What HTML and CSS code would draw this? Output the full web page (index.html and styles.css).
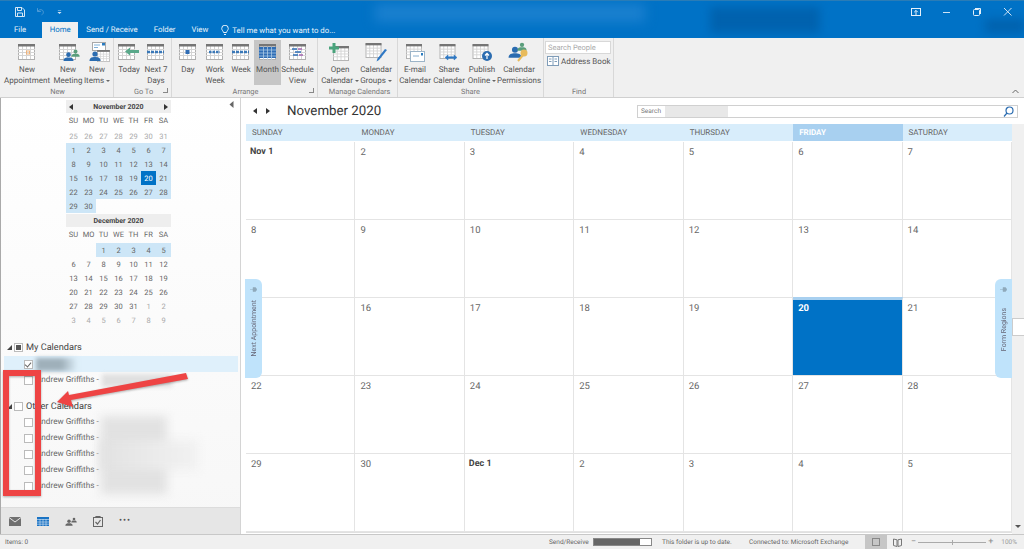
FILE: index.html
```html
<!DOCTYPE html>
<html lang="en">
<head>
    <meta charset="UTF-8">
    <title>Calendar - Outlook</title>
    <link rel="stylesheet" href="styles.css">
</head>
<body>
    <svg class="defs">
        <symbol id="cal" viewBox="0 0 17 16">
            <rect x="0.5" y="1" width="16" height="14.5" fill="#fff" stroke="#b0b0b0"/>
            <path d="M0 5.5H17M0 8.5H17M0 11.5H17M4.5 2V15M8.5 2V15M12.5 2V15" stroke="#d4d4d4" fill="none"/>
            <rect width="17" height="2.5" fill="#757575"/>
        </symbol>
        <symbol id="person" viewBox="0 0 12 10">
            <circle cx="6" cy="3" r="2.6"/>
            <path d="M0.5 10C0.5 6.5 3 6 6 6S11.5 6.5 11.5 10Z"/>
        </symbol>
        <symbol id="pin" viewBox="0 0 7 7">
            <path d="M0 3.500H3M3 1.500V5.500H5.500L7 3.500L5.500 1.500Z" fill="#8fa9bb" stroke="#8fa9bb" stroke-width="0.500"/>
        </symbol>
    </svg>

    <header class="titlebar">
        <div class="glow"></div>
        <div class="smudge"></div>
        <div class="smudge two"></div>
        <div class="qat">
            <svg width="12" height="12" viewBox="0 0 12 12" fill="none" stroke="#d5e6f5"><path d="M1.5 1.5H8L10.500 4V10.500H1.5Z"/><path d="M3.5 1.5V4.5H7.5V1.5M3.5 10.500V7H8.500V10.500"/></svg>
            <svg class="undo" width="10" height="9" viewBox="0 0 12 10" fill="none" stroke="#4d9ad6" stroke-width="1.2"><path d="M3 1V5H7M3 5C5 2 10 2 10 6C10 7.500 9 8.500 8 9"/></svg>
            <svg class="more" width="5" height="6" viewBox="0 0 6 6" fill="#cfe3f4"><path d="M1 0.500H5V1.300H1ZM0.500 3H5.500L3 5.500Z"/></svg>
            <div class="winbtns">
                <svg width="10" height="8" viewBox="0 0 10 8" fill="none" stroke="#e4f0fa"><rect x="0.500" y="0.500" width="9" height="7"/><path d="M5 7V2.500M3.200 4.200L5 2.400L6.800 4.200"/></svg>
                <svg width="10" height="8" viewBox="0 0 10 8" stroke="#cfe3f4"><path d="M1 4.500H8"/></svg>
                <svg width="10" height="8" viewBox="0 0 10 8" fill="none" stroke="#e4f0fa"><rect x="1.500" y="1.500" width="6" height="6" rx="1"/><path d="M3 0.500H8.500V6"/></svg>
                <svg width="10" height="8" viewBox="0 0 10 8" fill="none" stroke="#cfe3f4"><path d="M1 0L8.500 7.500M8.500 0L1 7.500"/></svg>
            </div>
        </div>
        <nav class="tabs">
            <span class="tab">File</span>
            <span class="tab home">Home</span>
            <span class="tab">Send / Receive</span>
            <span class="tab">Folder</span>
            <span class="tab">View</span>
            <span class="tell">
                <svg width="8" height="11" viewBox="0 0 8 11" fill="none" stroke="#e4f0fa"><path d="M2.500 7.500C2 5.500 0.700 5 0.700 3.500A3.300 3.300 0 0 1 7.300 3.500C7.300 5 6 5.500 5.500 7.500ZM3 9.500H5"/></svg>
                Tell me what you want to do...
            </span>
        </nav>
    </header>

    <section class="ribbon">
        <div class="group g-new">
            <div class="btns">
                <div class="btn">
                    <svg width="28" height="20" viewBox="0 0 28 20"><use href="#cal" x="5" y="2" width="17" height="16"/><rect x="13.500" y="9" width="3" height="3" fill="none" stroke="#eeb27a"/></svg>
                    <span>New<br>Appointment</span>
                </div>
                <div class="btn">
                    <svg width="28" height="20" viewBox="0 0 28 20"><use href="#cal" x="5" y="2" width="17" height="16"/><use href="#person" x="9" y="10" width="11" height="9" fill="#2b6cb0"/><use href="#person" x="17" y="7" width="9" height="8" fill="#5a9e7c"/></svg>
                    <span>New<br>Meeting</span>
                </div>
                <div class="btn">
                    <svg width="28" height="20" viewBox="0 0 28 20"><rect x="9.500" y="0.500" width="13" height="8" fill="#fff" stroke="#a8a8a8"/><path d="M11 3H17M11 5.500H15" stroke="#7fb0d8"/><rect x="19" y="1" width="3" height="2.500" fill="#2b7cc0"/><use href="#cal" x="14" y="8" width="13" height="12"/><use href="#person" x="6" y="9" width="12" height="10" fill="#2b6cb0"/></svg>
                    <span>New<br>Items <i class="drop"></i></span>
                </div>
            </div>
            <div class="glabel">New</div>
        </div>
        <div class="group g-goto">
            <div class="btns">
                <div class="btn">
                    <svg width="28" height="20" viewBox="0 0 28 20"><use href="#cal" x="3" y="2" width="17" height="16"/><path d="M10 9.500L15 5.500V8H24V11H15V13.500Z" fill="#5aa88a"/></svg>
                    <span>Today</span>
                </div>
                <div class="btn">
                    <svg width="28" height="20" viewBox="0 0 28 20"><use href="#cal" x="5" y="2" width="17" height="16"/><path d="M5 10H22" stroke="#3a78b8" stroke-width="2.500" stroke-dasharray="3 1"/></svg>
                    <span>Next 7<br>Days</span>
                </div>
            </div>
            <div class="glabel">Go To</div>
            <i class="launcher"></i>
        </div>
        <div class="group g-arrange">
            <div class="btns">
                <div class="btn">
                    <svg width="28" height="20" viewBox="0 0 28 20"><use href="#cal" x="5" y="2" width="17" height="16"/><rect x="11.500" y="8" width="4" height="4" fill="#2f6db5"/></svg>
                    <span>Day</span>
                </div>
                <div class="btn">
                    <svg width="28" height="20" viewBox="0 0 28 20"><use href="#cal" x="5" y="2" width="17" height="16"/><path d="M8 10H19" stroke="#3a78b8" stroke-width="2.500" stroke-dasharray="2.500 1"/></svg>
                    <span>Work<br>Week</span>
                </div>
                <div class="btn">
                    <svg width="28" height="20" viewBox="0 0 28 20"><use href="#cal" x="5" y="2" width="17" height="16"/><path d="M5 10H22" stroke="#3a78b8" stroke-width="2.500" stroke-dasharray="3 1"/></svg>
                    <span>Week</span>
                </div>
                <div class="btn on">
                    <svg width="28" height="20" viewBox="0 0 28 20"><use href="#cal" x="5" y="2" width="17" height="16"/><rect x="5" y="5" width="17" height="11" fill="#2f6db5"/><path d="M5 8H22M5 11H22M5 14H22M9.500 5V18M13.500 5V18M17.500 5V18" stroke="#b8d2ea" stroke-width="0.700"/></svg>
                    <span>Month</span>
                </div>
                <div class="btn">
                    <svg width="28" height="20" viewBox="0 0 28 20"><use href="#cal" x="5" y="2" width="17" height="16"/><path d="M8 7H13M11 10H17M9 13H14" stroke="#2f6db5" stroke-width="1.500"/><path d="M14 7H18M15 13H19" stroke="#a566b0" stroke-width="1.500"/></svg>
                    <span>Schedule<br>View</span>
                </div>
            </div>
            <div class="glabel">Arrange</div>
            <i class="launcher"></i>
        </div>
        <div class="group g-manage">
            <div class="btns">
                <div class="btn">
                    <svg width="28" height="20" viewBox="0 0 28 20"><use href="#cal" x="7" y="4" width="16" height="15"/><path d="M8 1V11M3 6H13" stroke="#4aa37c" stroke-width="3"/></svg>
                    <span>Open<br>Calendar <i class="drop"></i></span>
                </div>
                <div class="btn">
                    <svg width="28" height="20" viewBox="0 0 28 20"><use href="#cal" x="3" y="1" width="17" height="15"/><path d="M25 8L17 18L14.500 19.500L15.500 16.500L23 7Z" fill="#2f78c4"/></svg>
                    <span>Calendar<br>Groups <i class="drop"></i></span>
                </div>
            </div>
            <div class="glabel">Manage Calendars</div>
        </div>
        <div class="group g-share">
            <div class="btns">
                <div class="btn">
                    <svg width="28" height="20" viewBox="0 0 28 20"><use href="#cal" x="5" y="2" width="16" height="15"/><rect x="9.500" y="9.500" width="14" height="10" fill="#fff" stroke="#9cb4c8"/><path d="M12 14H18" stroke="#8ab0d0"/><rect x="20" y="11" width="2" height="2.500" fill="#2b7cc0"/></svg>
                    <span>E-mail<br>Calendar</span>
                </div>
                <div class="btn">
                    <svg width="28" height="20" viewBox="0 0 28 20"><use href="#cal" x="4" y="2" width="17" height="15"/><path d="M10 15.500L13 13V14.700H19V13L22 15.500L19 18V16.300H13V18Z" fill="#2f78c4" stroke="#2f78c4" stroke-width="0.500"/></svg>
                    <span>Share<br>Calendar</span>
                </div>
                <div class="btn">
                    <svg width="28" height="20" viewBox="0 0 28 20"><use href="#cal" x="4" y="2" width="17" height="15"/><circle cx="19" cy="14" r="5" fill="#2b6cb0"/><path d="M19 17V11.500M17 13.500L19 11.300L21 13.500" stroke="#fff" stroke-width="1.200" fill="none"/></svg>
                    <span>Publish<br>Online <i class="drop"></i></span>
                </div>
                <div class="btn">
                    <svg width="28" height="20" viewBox="0 0 28 20"><use href="#person" x="3" y="4" width="14" height="12" fill="#2b6cb0"/><use href="#person" x="12" y="0" width="10" height="9" fill="#5a9e7c"/><circle cx="19" cy="11" r="3.500" fill="#e8bb5c"/><path d="M18 13L13 19" stroke="#e8bb5c" stroke-width="2"/></svg>
                    <span>Calendar<br>Permissions</span>
                </div>
            </div>
            <div class="glabel">Share</div>
        </div>
        <div class="group g-find">
            <div class="findbox">
                <div class="people">Search People</div>
                <div class="addr">
                    <svg width="12" height="10" viewBox="0 0 12 10" fill="#fff" stroke="#7f9cb8"><rect x="0.500" y="0.500" width="11" height="9"/><path d="M6 0.500V9.500M2 3H4.500M2 5.500H4.500M7.500 3H10M7.500 5.500H10"/></svg>
                    Address Book
                </div>
            </div>
            <div class="glabel">Find</div>
        </div>
        <svg class="collapse" width="7" height="5" viewBox="0 0 7 5" fill="none" stroke="#666"><path d="M0.500 4L3.500 1L6.500 4"/></svg>
    </section>

    <div class="workspace">
        <aside class="sidebar">
            <svg class="fold" width="5" height="7" viewBox="0 0 5 7" fill="#666"><path d="M4.500 0L0.500 3.500L4.500 7Z"/></svg>

            <div class="month">
                <div class="mhead"><i class="tri-l"></i><b>November 2020</b><i class="tri-r"></i></div>
                <div class="days wk"><span>SU</span><span>MO</span><span>TU</span><span>WE</span><span>TH</span><span>FR</span><span>SA</span></div>
                <div class="days">
                    <span class="dim">25</span><span class="dim">26</span><span class="dim">27</span><span class="dim">28</span><span class="dim">29</span><span class="dim">30</span><span class="dim">31</span>
                    <span class="sel">1</span><span class="sel">2</span><span class="sel">3</span><span class="sel">4</span><span class="sel">5</span><span class="sel">6</span><span class="sel">7</span>
                    <span class="sel">8</span><span class="sel">9</span><span class="sel">10</span><span class="sel">11</span><span class="sel">12</span><span class="sel">13</span><span class="sel">14</span>
                    <span class="sel">15</span><span class="sel">16</span><span class="sel">17</span><span class="sel">18</span><span class="sel">19</span><span class="today">20</span><span class="sel">21</span>
                    <span class="sel">22</span><span class="sel">23</span><span class="sel">24</span><span class="sel">25</span><span class="sel">26</span><span class="sel">27</span><span class="sel">28</span>
                    <span class="sel">29</span><span class="sel">30</span>
                </div>
            </div>
            <div class="month dec">
                <div class="mhead"><b>December 2020</b></div>
                <div class="days wk"><span>SU</span><span>MO</span><span>TU</span><span>WE</span><span>TH</span><span>FR</span><span>SA</span></div>
                <div class="days">
                    <span></span><span></span><span class="sel">1</span><span class="sel">2</span><span class="sel">3</span><span class="sel">4</span><span class="sel">5</span>
                    <span>6</span><span>7</span><span>8</span><span>9</span><span>10</span><span>11</span><span>12</span>
                    <span>13</span><span>14</span><span>15</span><span>16</span><span>17</span><span>18</span><span>19</span>
                    <span>20</span><span>21</span><span>22</span><span>23</span><span>24</span><span>25</span><span>26</span>
                    <span>27</span><span>28</span><span>29</span><span>30</span><span>31</span><span class="dim">1</span><span class="dim">2</span>
                    <span class="dim">3</span><span class="dim">4</span><span class="dim">5</span><span class="dim">6</span><span class="dim">7</span><span class="dim">8</span><span class="dim">9</span>
                </div>
            </div>

            <div class="calgroup first"><i class="open"></i><i class="box mixed"></i>My Calendars</div>
            <div class="calrow hl"><i class="box checked"></i><span class="smear"></span></div>
            <div class="calrow"><i class="box"></i>Andrew Griffiths -<span class="smear grey"></span></div>

            <div class="calgroup"><i class="open"></i><i class="box"></i>Other Calendars</div>
            <div class="calrow"><i class="box"></i>Andrew Griffiths -</div>
            <div class="calrow"><i class="box"></i>Andrew Griffiths -</div>
            <div class="calrow"><i class="box"></i>Andrew Griffiths -</div>
            <div class="calrow"><i class="box"></i>Andrew Griffiths -</div>
            <div class="calrow"><i class="box"></i>Andrew Griffiths -</div>
            <div class="bigsmear"></div>
            <div class="bigsmear wide"></div>

            <nav class="navbar">
                <svg width="12" height="9" viewBox="0 0 12 9"><rect width="12" height="9" fill="#6f6f6f"/><path d="M0 0.500L6 5L12 0.500" fill="none" stroke="#e6e6e6"/></svg>
                <svg width="12" height="9" viewBox="0 0 12 9"><rect width="12" height="9" fill="#1a73c4"/><path d="M0 2.500H12M0 5H12M0 7.200H12M3 2V9M6 2V9M9 2V9" stroke="#d8e8f5" stroke-width="0.600"/></svg>
                <svg width="12" height="9" viewBox="0 0 12 9" fill="#666"><use href="#person" x="0" y="2" width="8" height="7"/><use href="#person" x="6" y="0" width="6" height="6"/></svg>
                <svg width="10" height="11" viewBox="0 0 10 11" fill="none" stroke="#666"><rect x="0.500" y="1.500" width="9" height="9"/><path d="M3 1.500H7V0.500H3ZM2.500 6L4.500 8L7.500 4" stroke-width="1.200"/></svg>
                <span class="dots">&bull;&bull;&bull;</span>
            </nav>

            <svg class="callout" width="200" height="140" viewBox="0 0 200 140">
                <rect x="6" y="6" width="32" height="120" fill="none" stroke="#ee4444" stroke-width="6"/>
                <path d="M186 6L188 12L71 33L73 40L57 35L68 24L69 28Z" fill="#ee4444"/>
            </svg>
        </aside>

        <main class="cal">
            <div class="calhead">
                <i class="tri-l big"></i><i class="tri-r big"></i>
                <h1>November 2020</h1>
                <div class="search">
                    <span class="hint">Search</span><span class="searchsmear"></span>
                    <svg width="11" height="11" viewBox="0 0 11 11" fill="none" stroke="#2b6cb0" stroke-width="1.200"><circle cx="6.500" cy="4.500" r="3.500"/><path d="M4 7L1 10.500"/></svg>
                </div>
            </div>
            <div class="calbody">
                <div class="gridwrap">
                    <div class="weekdays">
                        <span>SUNDAY</span><span>MONDAY</span><span>TUESDAY</span><span>WEDNESDAY</span><span>THURSDAY</span><span class="now">FRIDAY</span><span>SATURDAY</span>
                    </div>
                    <div class="grid">
                        <div class="strong">Nov 1</div><div>2</div><div>3</div><div>4</div><div>5</div><div>6</div><div>7</div>
                        <div>8</div><div>9</div><div>10</div><div>11</div><div>12</div><div>13</div><div>14</div>
                        <div>15</div><div>16</div><div>17</div><div>18</div><div>19</div><div class="todaycell">20</div><div>21</div>
                        <div>22</div><div>23</div><div>24</div><div>25</div><div>26</div><div>27</div><div>28</div>
                        <div>29</div><div>30</div><div class="strong">Dec 1</div><div>2</div><div>3</div><div>4</div><div>5</div>
                    </div>
                    <div class="sidetab left"><svg width="7" height="7"><use href="#pin"/></svg><span>Next Appointment</span></div>
                    <div class="sidetab right"><svg width="7" height="7"><use href="#pin"/></svg><span>Form Regions</span></div>
                </div>
                <div class="scroll">
                    <div class="thumb"></div>
                    <i class="down"></i>
                </div>
            </div>
        </main>
    </div>

    <footer class="status">
        <span class="items">Items: 0</span>
        <span class="sr">Send/Receive</span>
        <span class="progress"><i></i></span>
        <span class="uptodate">This folder is up to date.</span>
        <span class="conn">Connected to: Microsoft Exchange</span>
        <span class="viewbtn"><i></i></span>
        <svg class="read" width="9" height="9" viewBox="0 0 9 9" fill="none" stroke="#777"><path d="M0.500 1L4 1.800V8.500L0.500 7.500ZM8.500 1L5 1.800V8.500L8.500 7.500Z"/></svg>
        <span class="zoomer"><span class="zm">&minus;</span><span class="slider"></span><span class="zm">+</span></span>
        <span class="pct">100%</span>
    </footer>
</body>
</html>
```

FILE: styles.css
```css
*{
    box-sizing: border-box;
}
html, body{
    margin: 0;
    height: 100%;
}
body{
    width: 1024px;
    height: 549px;
    overflow: hidden;
    font-family: Roboto, "Liberation Sans", sans-serif;
    font-size: 8px;
    text-rendering: geometricPrecision;
    color: #555;
    background: #fff;
    display: flex;
    flex-direction: column;
}
i{
    font-style: normal;
}
.defs{
    position: absolute;
    width: 0;
    height: 0;
}

/* title bar and tabs */
.titlebar{
    position: relative;
    height: 38px;
    flex: none;
    background: #0072c6;
    border-top: 1px solid #2a7cb6;
    overflow: hidden;
}
.glow{
    position: absolute;
    left: 375px;
    top: 3px;
    width: 270px;
    height: 18px;
    background: #1a80cf;
    filter: blur(6px);
}
.smudge{
    position: absolute;
    left: 710px;
    top: 6px;
    width: 110px;
    height: 26px;
    background: #0062ae;
    filter: blur(5px);
}
.smudge.two{
    left: 985px;
    top: 18px;
    width: 40px;
    height: 14px;
}
.qat{
    position: relative;
    height: 21px;
    display: flex;
    align-items: center;
    padding-left: 14px;
}
.undo{
    margin-left: 9px;
}
.more{
    margin-left: 12px;
}
.winbtns{
    margin-left: auto;
    width: 113px;
    display: flex;
    justify-content: space-between;
    padding-right: 11px;
}
.tabs{
    position: relative;
    height: 16px;
    display: flex;
    align-items: center;
    padding-left: 6px;
    font-size: 7.800px;
    color: #e8f2fa;
}
.tab{
    padding: 0 8px;
    line-height: 16px;
}
.tab.home{
    margin-left: 8px;
    width: 36px;
    padding: 0;
    text-align: center;
    background: #f0f0f0;
    color: #0072c6;
}
.tell{
    margin-left: 5px;
    display: flex;
    align-items: center;
    gap: 3px;
}

/* ribbon */
.ribbon{
    position: relative;
    height: 60px;
    flex: none;
    display: flex;
    background: #f0f0f0;
    border-bottom: 1px solid #d0d0d0;
}
.group{
    position: relative;
    display: flex;
    flex-direction: column;
    border-right: 1px solid #d8d8d8;
    padding-top: 2px;
}
.btns{
    height: 47px;
    display: grid;
    align-items: start;
}
.g-new{
    width: 114px;
    padding-left: 2px;
}
.g-new .btns{
    grid-template-columns: 50px 32px 26px;
}
.g-goto{
    width: 58px;
    padding-left: 2px;
}
.g-goto .btns{
    grid-template-columns: 26px 28px;
}
.g-arrange{
    width: 146px;
    padding-left: 2px;
}
.g-arrange .btns{
    grid-template-columns: 28px 26px 26px 27px 33px;
}
.g-manage{
    width: 80px;
    padding-left: 4px;
}
.g-manage .btns{
    grid-template-columns: 36px 36px;
}
.g-share{
    width: 146px;
}
.g-share .btns{
    grid-template-columns: 34px 34px 32px 42px;
}
.g-find{
    width: 70px;
    padding-left: 1px;
    padding-top: 3px;
}
.btn{
    height: 45px;
    display: flex;
    flex-direction: column;
    align-items: center;
    text-align: center;
    line-height: 11px;
    padding-top: 2px;
    white-space: nowrap;
}
.btn svg{
    margin-bottom: 2px;
    flex: none;
}
.btn.on{
    background: #c6c6c6;
}
.drop{
    display: inline-block;
    border: 2px solid transparent;
    border-top-color: #666;
    border-bottom: 0;
    vertical-align: middle;
}
.glabel{
    text-align: center;
    font-size: 7.400px;
    line-height: 10px;
    color: #777;
}
.launcher{
    position: absolute;
    right: 3px;
    bottom: 4px;
    width: 5px;
    height: 5px;
    border-right: 1px solid #888;
    border-bottom: 1px solid #888;
}
.findbox{
    height: 46px;
}
.people{
    width: 66px;
    height: 13px;
    line-height: 11px;
    background: #fff;
    border: 1px solid #d8d8d8;
    padding-left: 2px;
    font-size: 7.500px;
    color: #aaa;
}
.addr{
    margin-top: 2px;
    display: flex;
    align-items: center;
    gap: 2px;
    padding-left: 2px;
    white-space: nowrap;
}
.collapse{
    position: absolute;
    right: 5px;
    bottom: 3px;
}

/* navigation pane */
.workspace{
    flex: 1;
    display: flex;
    min-height: 0;
}
.sidebar{
    position: relative;
    width: 241px;
    flex: none;
    display: flex;
    flex-direction: column;
    padding-top: 2px;
    background: linear-gradient(#fff, #f7f7f7);
    border-left: 1px solid #aaa;
    border-right: 1px solid #d4d4d4;
}
.fold{
    position: absolute;
    left: 228px;
    top: 3px;
}
.month{
    width: 105px;
    margin-left: 65px;
}
.dec{
    margin-top: 1px;
}
.mhead{
    height: 13px;
    background: #eeeeee;
    display: flex;
    align-items: center;
    justify-content: center;
    position: relative;
    font-size: 7px;
    color: #444;
}
.tri-l, .tri-r{
    border: 3px solid transparent;
    border-left-width: 0;
    border-right: 4px solid #333;
}
.tri-r{
    border-right-width: 0;
    border-left: 4px solid #333;
}
.mhead .tri-l{
    position: absolute;
    left: 3px;
}
.mhead .tri-r{
    position: absolute;
    right: 3px;
}
.days{
    display: grid;
    grid-template-columns: repeat(7, 15px);
    grid-auto-rows: 14px;
    font-size: 7.500px;
    text-align: center;
    line-height: 15px;
    color: #666;
}
.days.wk{
    grid-auto-rows: 16px;
    line-height: 16px;
}
.dim{
    color: #aaa;
}
.sel{
    background: #cde6f7;
}
.today{
    background: #0072c6;
    color: #fff;
}
.calgroup{
    height: 16px;
    margin-top: 10px;
    display: flex;
    align-items: center;
    padding-left: 6px;
    font-size: 9.200px;
    color: #444;
}
.calgroup.first{
    height: 18px;
    margin-top: 11px;
}
.open{
    width: 0;
    height: 0;
    border-right: 5px solid #444;
    border-top: 5px solid transparent;
    margin-right: 2px;
}
.box{
    position: relative;
    display: block;
    width: 9px;
    height: 9px;
    flex: none;
    background: #fff;
    border: 1px solid #bbb;
}
.calgroup .box{
    margin-right: 3px;
}
.calrow .box{
    margin-right: 3px;
}
.mixed::after{
    content: "";
    position: absolute;
    left: 1px;
    top: 1px;
    width: 5px;
    height: 5px;
    background: #555;
}
.checked::after{
    content: "";
    position: absolute;
    left: 1px;
    top: 0;
    width: 3px;
    height: 5px;
    border-right: 1px solid #666;
    border-bottom: 1px solid #666;
    transform: rotate(40deg);
}
.calrow{
    height: 16px;
    display: flex;
    align-items: center;
    padding-left: 23px;
    font-size: 8.200px;
    color: #666;
    white-space: nowrap;
}
.calrow.hl{
    background: #dff0fb;
    margin: 0 2px 0 3px;
    padding-left: 20px;
}
.smear{
    display: block;
    width: 42px;
    height: 13px;
    background: linear-gradient(90deg, #9fb0ba 60%, #dff0fb);
    filter: blur(2px);
}
.smear.grey{
    width: 70px;
    margin-left: 3px;
    background: #e0e0e0;
}
.bigsmear{
    position: absolute;
    left: 100px;
    top: 318px;
    width: 66px;
    height: 78px;
    background: #e2e2e2;
    filter: blur(5px);
}
.bigsmear.wide{
    top: 342px;
    width: 98px;
    height: 30px;
    background: linear-gradient(90deg, #e2e2e2, #f2f2f2);
}
.navbar{
    margin-top: auto;
    height: 27px;
    display: flex;
    align-items: center;
    gap: 16px;
    padding-left: 8px;
    background: #e6e6e6;
    border-top: 1px solid #dcdcdc;
}
.dots{
    font-size: 9px;
    letter-spacing: 1px;
    color: #555;
}
.callout{
    position: absolute;
    left: -1px;
    top: 269px;
    filter: drop-shadow(0 1px 1px rgba(0,0,0,0.3));
}

/* calendar */
.cal{
    flex: 1;
    min-width: 0;
    display: flex;
    flex-direction: column;
}
.calhead{
    height: 26px;
    flex: none;
    display: flex;
    align-items: center;
    padding: 0 6px 0 12px;
}
.calhead .tri-r{
    margin-left: 9px;
}
h1{
    margin: 0 0 0 17px;
    font-size: 13.300px;
    font-weight: 400;
    color: #333;
}
.search{
    margin-left: auto;
    width: 381px;
    height: 13px;
    display: flex;
    align-items: center;
    background: #fff;
    border: 1px solid #d0d0d0;
    padding: 0 3px;
}
.hint{
    font-size: 6.500px;
    color: #777;
}
.searchsmear{
    width: 63px;
    height: 11px;
    margin-left: 4px;
    background: #e8e8e8;
}
.search svg{
    margin-left: auto;
}
.calbody{
    flex: 1;
    min-height: 0;
    display: flex;
}
.gridwrap{
    position: relative;
    flex: 1;
    padding-left: 5px;
}
.weekdays{
    height: 17px;
    display: grid;
    grid-template-columns: repeat(7, 1fr);
    background: #d8edfb;
    font-size: 8px;
    line-height: 17px;
    color: #666;
}
.weekdays span{
    padding-left: 6px;
}
.weekdays .now{
    background: #a8d0f0;
    color: #fff;
    font-weight: 700;
}
.grid{
    display: grid;
    grid-template-columns: repeat(7, 1fr);
    grid-auto-rows: 78px;
    padding-top: 1px;
    border-bottom: 1px solid #e0e0e0;
}
.grid div{
    border-right: 1px solid #e4e4e4;
    border-bottom: 1px solid #e4e4e4;
    padding: 5px 0 0 5px;
    font-size: 9.500px;
    color: #666;
}
.grid .strong{
    font-size: 9px;
    padding-left: 4px;
    font-weight: 700;
    color: #444;
}
.grid .todaycell{
    margin-top: -1px;
    background: #0072c6;
    border-top: 3px solid #a8d0f0;
    padding-top: 3px;
    color: #fff;
    font-weight: 700;
}
.sidetab{
    position: absolute;
    top: 155px;
    width: 17px;
    height: 99px;
    background: #bfe3fb;
    display: flex;
    flex-direction: column;
    align-items: center;
    font-size: 7px;
    color: #667;
}
.sidetab.left{
    left: 4px;
    border-radius: 0 6px 6px 0;
}
.sidetab.right{
    right: 0;
    border-radius: 6px 0 0 6px;
}
.sidetab svg{
    margin-top: 7px;
    flex: none;
}
.sidetab.left span{
    margin-top: 7px;
}
.sidetab span{
    margin-top: 15px;
    writing-mode: vertical-rl;
    transform: rotate(180deg);
    white-space: nowrap;
}
.scroll{
    position: relative;
    width: 12px;
    flex: none;
    background: #f0f0f0;
}
.thumb{
    margin-top: 194px;
    height: 18px;
    background: #fff;
    border: 1px solid #ccc;
    border-right: 0;
}
.down{
    position: absolute;
    left: 3px;
    bottom: 6px;
    border: 3px solid transparent;
    border-top-color: #555;
    border-bottom: 0;
}

/* status bar */
.status{
    height: 15px;
    flex: none;
    display: flex;
    align-items: center;
    background: #f0f0f0;
    border-top: 1px solid #c8c8c8;
    font-size: 6.500px;
    color: #666;
    white-space: nowrap;
}
.items{
    margin-left: 5px;
    width: 544px;
}
.sr{
    width: 44px;
}
.progress{
    width: 59px;
    height: 8px;
    border: 1px solid #888;
    background: #fff;
}
.progress i{
    display: block;
    width: 80%;
    height: 100%;
    background: #666;
}
.uptodate{
    margin-left: 10px;
    width: 87px;
}
.conn{
    width: 116px;
}
.viewbtn{
    width: 22px;
    height: 14px;
    background: #c6c6c6;
    display: flex;
    align-items: center;
    justify-content: center;
}
.viewbtn i{
    width: 8px;
    height: 8px;
    border: 1px solid #888;
}
.read{
    margin-left: 6px;
}
.zoomer{
    margin-left: 9px;
    display: flex;
    align-items: center;
    gap: 2px;
}
.zm{
    font-size: 9px;
    color: #888;
}
.slider{
    position: relative;
    width: 68px;
    height: 1px;
    background: #aaa;
}
.slider::after{
    content: "";
    position: absolute;
    left: 34px;
    top: -2px;
    width: 1px;
    height: 5px;
    background: #aaa;
}
.pct{
    margin-left: 8px;
    color: #999;
}
```
